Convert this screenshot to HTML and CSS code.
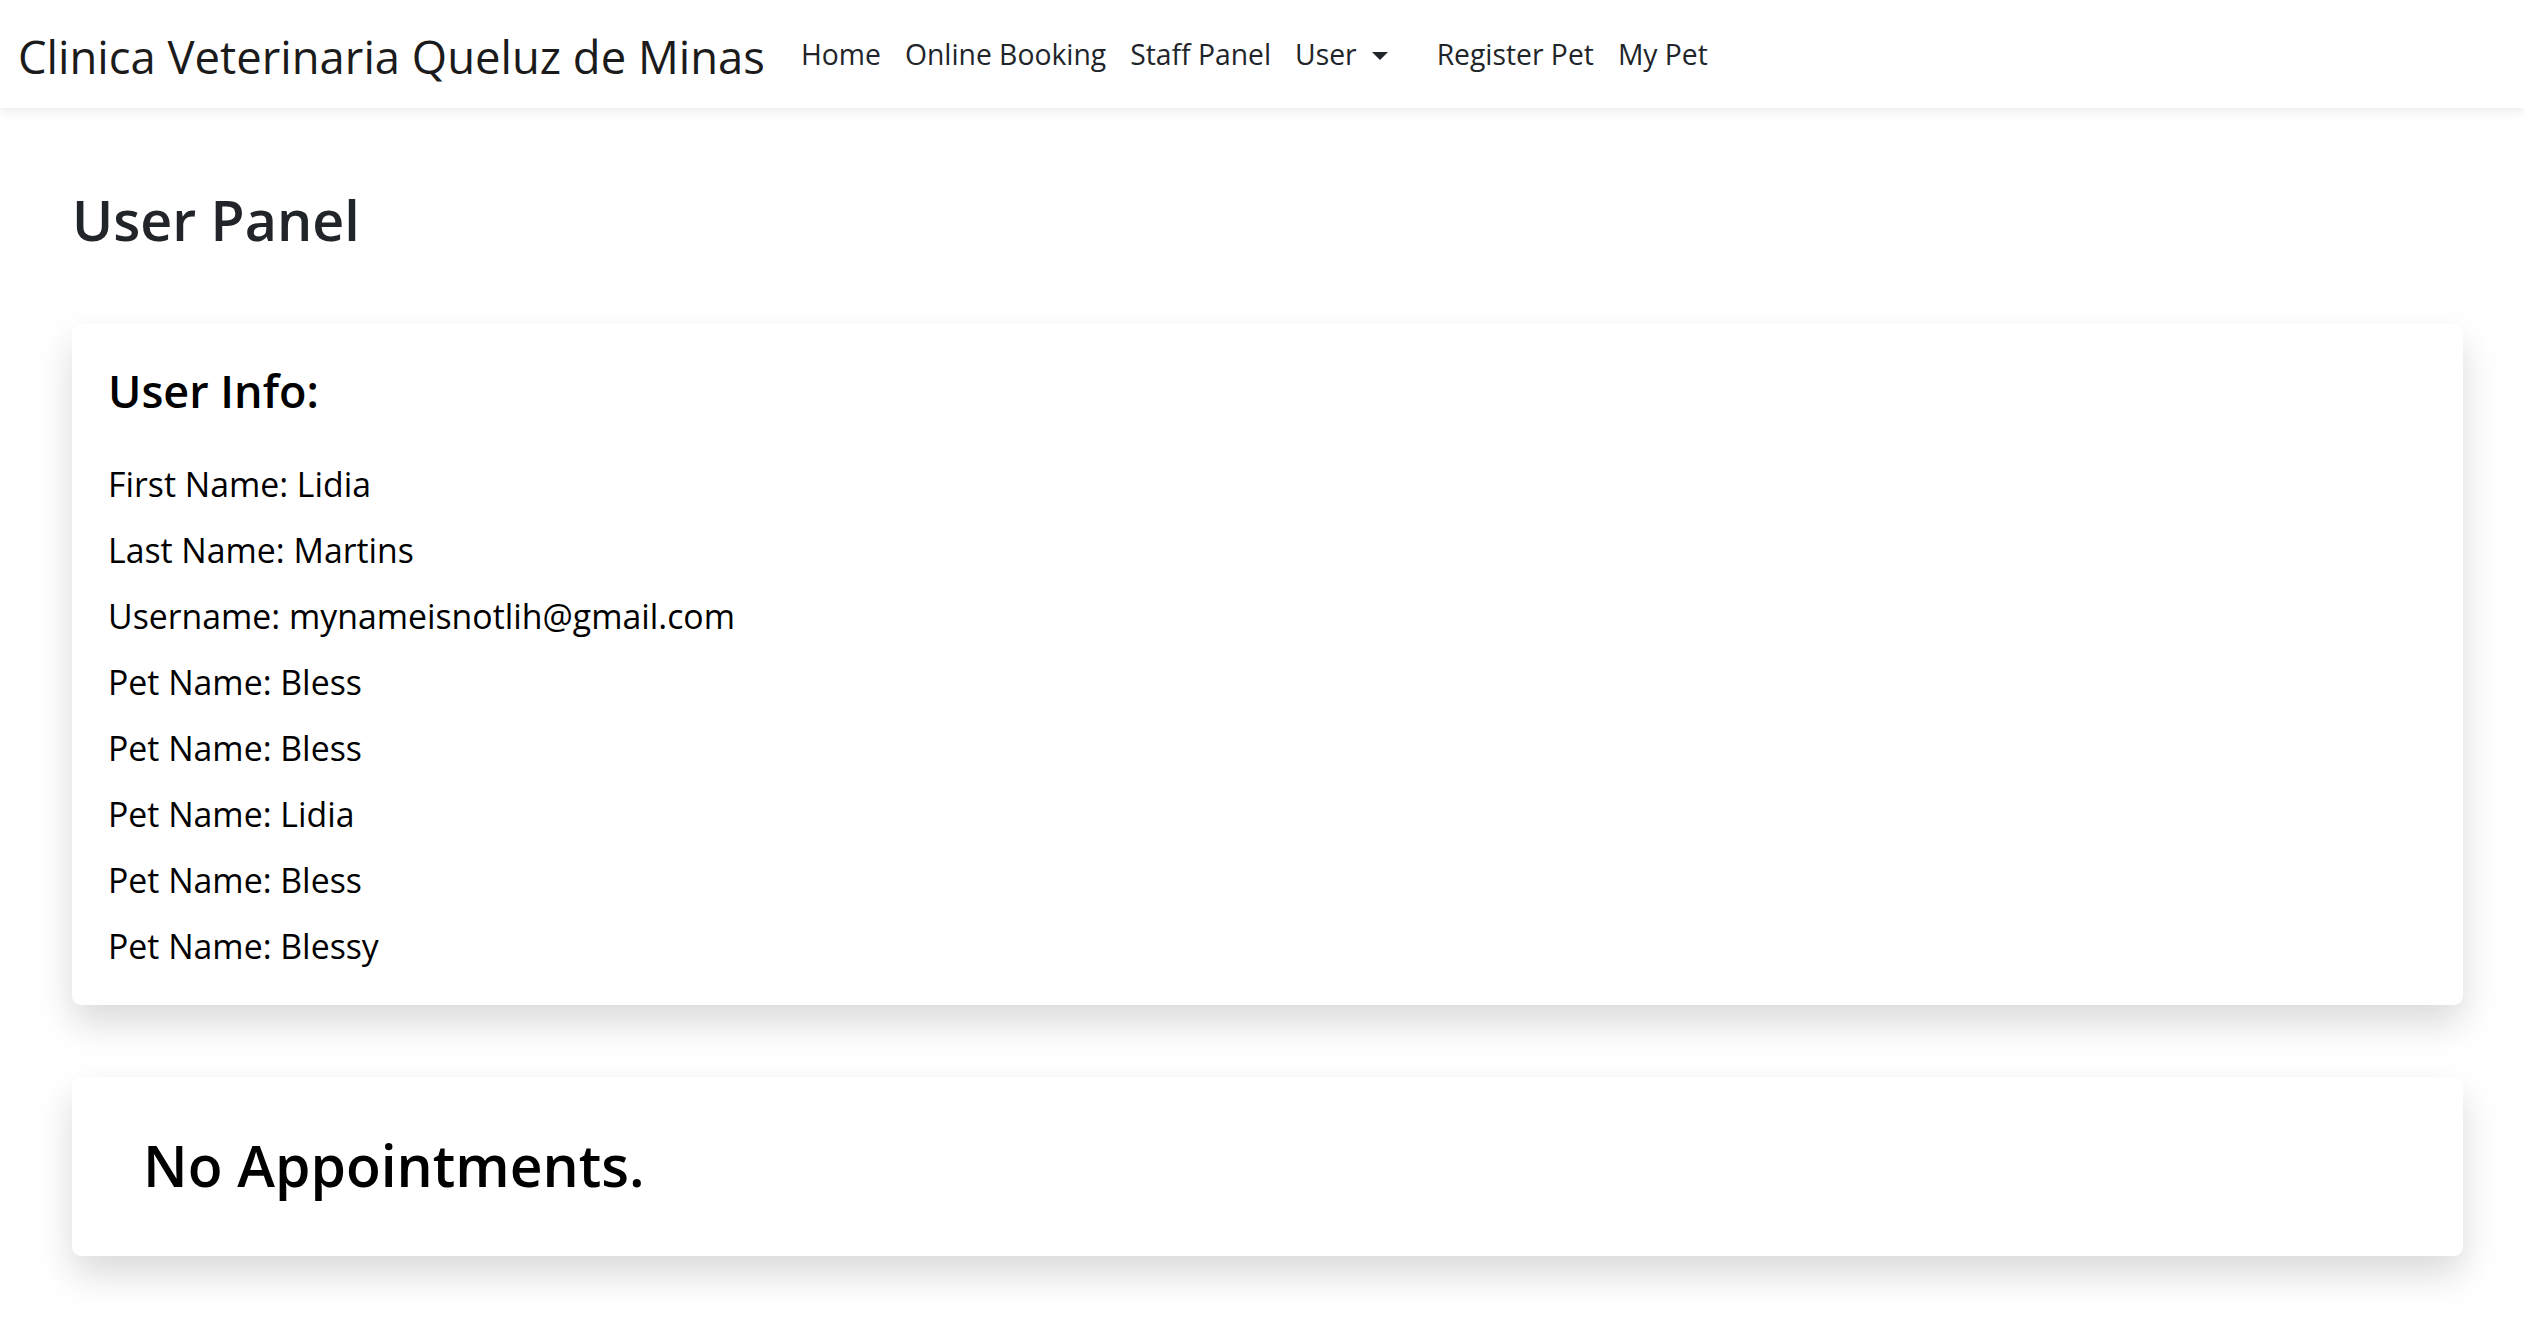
FILE: index.html
```html
<!DOCTYPE html>
<html lang="en">
<head>
<meta charset="utf-8">
<title>User Panel - Clinica Veterinaria Queluz de Minas</title>
<link rel="stylesheet" href="styles.css">
</head>
<body>
<nav class="navbar">
  <a class="brand" href="#">Clinica Veterinaria Queluz de Minas</a>
  <ul class="nav">
    <li><a class="nav-link" href="#">Home</a></li>
    <li><a class="nav-link" href="#">Online Booking</a></li>
    <li><a class="nav-link" href="#">Staff Panel</a></li>
    <li><a class="nav-link dropdown-toggle" href="#">User</a></li>
  </ul>
  <ul class="nav nav-extra">
    <li><a class="nav-link" href="#">Register Pet</a></li>
    <li><a class="nav-link" href="#">My Pet</a></li>
  </ul>
</nav>

<main class="page">
  <h1 class="page-title">User Panel</h1>

  <section class="card info-card">
    <h3 class="card-title">User Info:</h3>
    <p>First Name: Lidia</p>
    <p>Last Name: Martins</p>
    <p>Username: mynameisnotlih@gmail.com</p>
    <p>Pet Name: Bless</p>
    <p>Pet Name: Bless</p>
    <p>Pet Name: Lidia</p>
    <p>Pet Name: Bless</p>
    <p>Pet Name: Blessy</p>
  </section>

  <section class="card empty-card">
    <h2 class="empty-title">No Appointments.</h2>
  </section>
</main>
</body>
</html>
```

FILE: styles.css
```css
html, body {
  margin: 0;
  padding: 0;
  background: #ffffff;
}

body {
  font-family: "Open Sans", "Noto Sans", "Liberation Sans", sans-serif;
  color: #000000;
}

a {
  text-decoration: none;
}

.navbar {
  height: 108px;
  display: flex;
  align-items: center;
  padding: 0 0 0 18px;
  background: #ffffff;
  box-shadow: 0 4px 9px rgba(0, 0, 0, 0.075);
  position: relative;
  z-index: 2;
}

.brand {
  font-size: 45.4px;
  line-height: 1.2;
  color: #1b1b1b;
  padding-top: 4px;
  margin-right: 24px;
  white-space: nowrap;
}

.nav {
  display: flex;
  list-style: none;
  margin: 0;
  padding: 0;
}

.nav-extra {
  margin-left: 25px;
}

.nav-link {
  display: block;
  font-size: 28.3px;
  line-height: 1.5;
  color: #212529;
  padding: 0 12px;
  white-space: nowrap;
}

.dropdown-toggle::after {
  content: "";
  display: inline-block;
  margin-left: 15px;
  vertical-align: 5px;
  border-top: 8px solid #212529;
  border-left: 8px solid transparent;
  border-right: 8px solid transparent;
}

.page {
  margin: 0 61px 0 72px;
  padding-bottom: 60px;
}

.page-title {
  margin: 79px 0 70px;
  font-size: 55.5px;
  line-height: 1.2;
  font-weight: 600;
  color: #212529;
}

.card {
  background: #ffffff;
  border-radius: 9px;
  box-shadow: 0 18px 37px rgba(0, 0, 0, 0.15);
}

.info-card {
  padding: 40px 36px 32px;
  margin-bottom: 72px;
}

.card-title {
  margin: 0 0 39px;
  font-size: 45px;
  line-height: 1.2;
  font-weight: 600;
}

.info-card p {
  margin: 0 0 12px;
  font-size: 33.8px;
  line-height: 54px;
}

.info-card p:last-child {
  margin-bottom: 0;
}

.empty-card {
  padding: 54px 71px 57px;
}

.empty-title {
  margin: 0;
  font-size: 57px;
  line-height: 1.2;
  font-weight: 600;
}
```
